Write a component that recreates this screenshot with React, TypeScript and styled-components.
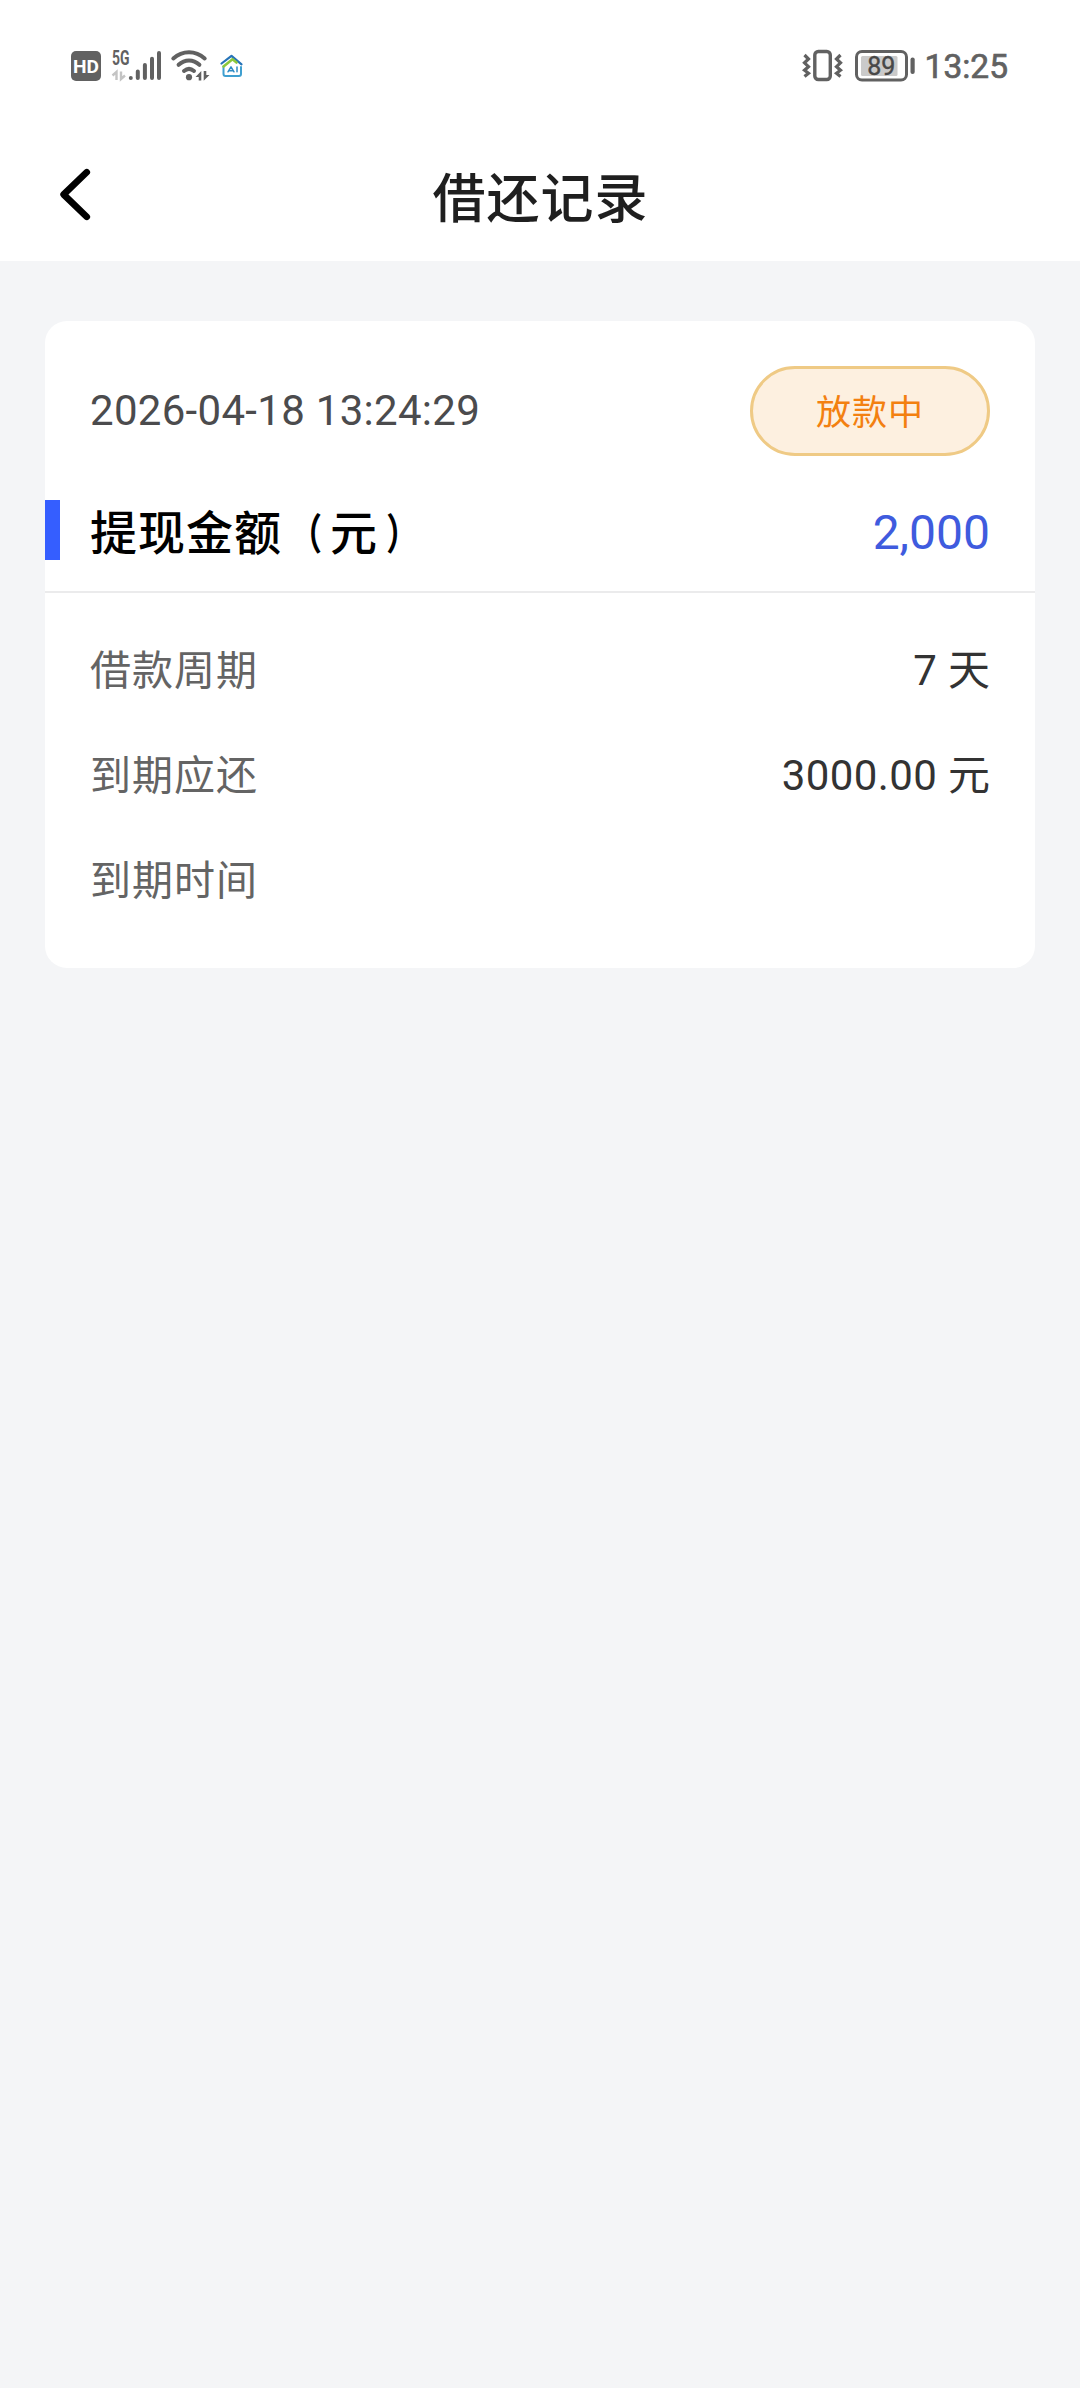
import React from "react";
import styled, { createGlobalStyle } from "styled-components";

const GlobalStyle = createGlobalStyle`
  * { box-sizing: border-box; }
  body {
    margin: 0;
    background: #f4f5f7;
    font-family: Roboto, "Noto Sans CJK SC", sans-serif;
  }
`;

const Page = styled.div`
  width: 1080px;
  min-height: 2388px;
  background: #f4f5f7;
`;

const TopArea = styled.header`
  height: 261px;
  background: #fff;
`;

const StatusBar = styled.div`
  height: 132px;
  padding: 0 72px 0 71px;
  display: flex;
  align-items: center;
  justify-content: space-between;
  color: #616161;
`;

const StatusGroup = styled.div`
  display: flex;
  align-items: center;
`;

const Glyph = styled.svg<{ $w: number; $h: number; $gap?: number }>`
  display: block;
  flex: none;
  width: ${(p) => p.$w}px;
  height: ${(p) => p.$h}px;
  margin-left: ${(p) => p.$gap ?? 0}px;
  overflow: visible;
`;

const Clock = styled.span`
  margin-left: 10px;
  padding-top: 1px;
  font-size: 33.5px;
  line-height: 40px;
  color: #616161;
  -webkit-text-stroke: 0.7px #616161;
`;

const NavBar = styled.nav`
  height: 129px;
  padding: 0 60px;
  display: grid;
  grid-template-columns: 40px 1fr 40px;
  align-items: center;
`;

const BackButton = styled.button`
  display: block;
  padding: 0;
  border: 0;
  background: none;
  margin-top: -4px;
`;

const Title = styled.h1`
  margin: 0;
  padding: 6px 0 0 1px;
  text-align: center;
  font-size: 53px;
  letter-spacing: 1px;
  line-height: 80px;
  font-weight: 500;
  color: #1f1f1f;
`;

const Card = styled.section`
  margin: 60px 45px 0;
  height: 647px;
  background: #fff;
  border-radius: 22px;
`;

const CardHead = styled.div`
  display: flex;
  align-items: center;
  justify-content: space-between;
  padding: 45px 45px 0;
`;

const DateText = styled.time`
  font-size: 42px;
  letter-spacing: 0.3px;
  line-height: 50px;
  color: #4b4b4d;
`;

const Badge = styled.span`
  width: 240px;
  height: 90px;
  display: flex;
  align-items: center;
  justify-content: center;
  padding-top: 5px;
  border: 3px solid #efca85;
  border-radius: 45px;
  background: #fdf0e0;
  color: #f38010;
  font-size: 35px;
  letter-spacing: 1px;
  line-height: 50px;
`;

const AmountRow = styled.div`
  display: flex;
  align-items: center;
  height: 137px;
  padding: 19px 45px 0 0;
  border-bottom: 2px solid #ebebec;
`;

const Accent = styled.i`
  width: 15px;
  height: 60px;
  margin: -6px 30px 0 0;
  background: #355eff;
`;

const AmountLabel = styled.span`
  flex: 1;
  padding-top: 1px;
  font-size: 47px;
  letter-spacing: 1px;
  line-height: 60px;
  font-weight: 500;
  color: #000;
`;

const Paren = styled.span<{ $origin: number }>`
  display: inline-block;
  width: 48px;
  font-weight: 700;
  transform: scale(0.68, 0.9);
  transform-origin: ${(p) => p.$origin}px 60%;
`;

const Amount = styled.span`
  font-size: 48px;
  line-height: 60px;
  color: #3f5bde;
`;

const Details = styled.dl`
  margin: 0;
  padding: 25px 45px 0;
`;

const Row = styled.div`
  height: 105px;
  display: flex;
  align-items: center;
  justify-content: space-between;
`;

const Label = styled.dt`
  font-size: 41px;
  letter-spacing: 1px;
  line-height: 60px;
  color: #646464;
`;

const Value = styled.dd`
  margin: 0;
  font-size: 42px;
  line-height: 60px;
  color: #333;
`;

const Digits = styled.span`
  letter-spacing: 0.4px;
`;

const GREY = "#616161";

const HdIcon = () => (
  <Glyph $w={30} $h={30} viewBox="0 0 30 30">
    <rect width="30" height="30" rx="5" fill={GREY} />
    <text x="15" y="21.5" textAnchor="middle" fontSize="18" fontWeight="700" fill="#fff" textLength="26" lengthAdjust="spacingAndGlyphs">
      HD
    </text>
  </Glyph>
);

const SignalIcon = () => (
  <Glyph $w={50} $h={32} $gap={11} viewBox="0 0 50 32">
    <text x="0" y="15" fontSize="19.5" fontWeight="700" fill={GREY} textLength="17.5" lengthAdjust="spacingAndGlyphs">
      5G
    </text>
    <path d="M0.500 25.500L4.500 22V30M9 21.500V29L13 25.500" fill="none" stroke="#c4c4c4" strokeWidth="2.400" />
    <g stroke={GREY} strokeWidth="4" strokeLinecap="round">
      <path d="M18.800 28v.1M25.800 21.500v6.600M32.900 15v13.100M40 8.700v19.400M47 3v25.100" />
    </g>
  </Glyph>
);

const WifiIcon = () => (
  <Glyph $w={38} $h={32} $gap={9} viewBox="0 0 38 32">
    <g fill="none" stroke={GREY} strokeWidth="4" strokeLinecap="round">
      <path d="M2.300 8.500C11.500 .2 24.500 .2 33.700 8.500" />
      <path d="M7.600 14.800C13.800 9 22.200 9 28.400 14.800" />
      <path d="M13 21C16.200 18.300 19.800 18.300 23 21" />
    </g>
    <circle cx="18" cy="27.200" r="3.100" fill={GREY} />
    <path d="M24.500 27l5.800-6v9.500h-2.600V27zM38.500 25l-5.800 5.800v-9.800h2.600v4z" fill={GREY} />
  </Glyph>
);

const HomeIcon = () => (
  <Glyph $w={24} $h={24} $gap={11} viewBox="0 0 24 24">
    <g fill="none" strokeLinecap="round" strokeLinejoin="round">
      <path d="M3.500 12.500v7.500q0 2 2 2h13.500q2 0 2-2v-7" stroke="#3f9fd0" strokeWidth="2" />
      <path d="M1.500 9.500L11.500 1.800l10 8.500" stroke="#2673b8" strokeWidth="2.200" />
      <path d="M3.500 12.500L12.500 5.200l4 3.300" stroke="#8cc83c" strokeWidth="2.600" />
      <path d="M8 17.800l3-5 3 5M9.300 16.700h3.600M17 13v4.800" stroke="#2f8bc4" strokeWidth="1.500" />
    </g>
  </Glyph>
);

const VibrateIcon = () => (
  <Glyph $w={39} $h={32} viewBox="0 0 39 32">
    <rect x="11.800" y="1.500" width="15.500" height="28" rx="3.500" fill="none" stroke={GREY} strokeWidth="3.400" />
    <g fill="none" stroke={GREY} strokeWidth="3.200">
      <path d="M1.500 5l4 4-4 3.800 4 3.800-4 3.600 4 3-4 3.300" />
      <path d="M37.500 5l-4 4 4 3.800-4 3.800 4 3.600-4 3 4 3.300" />
    </g>
  </Glyph>
);

const BatteryIcon = () => (
  <Glyph $w={60} $h={32} $gap={13} viewBox="0 0 60 32">
    <rect x="1.500" y="1.500" width="50" height="28.500" rx="5.500" fill="none" stroke={GREY} strokeWidth="3" />
    <rect x="6" y="6" width="36.500" height="20" rx="1.500" fill="#cacaca" />
    <rect x="55.500" y="7.500" width="4.200" height="16.500" rx="2" fill={GREY} />
    <text x="26.300" y="24.500" textAnchor="middle" fontSize="25" fill="#484848" stroke="#484848" strokeWidth="0.4">
      89
    </text>
  </Glyph>
);

const BackIcon = () => (
  <Glyph $w={30} $h={51} viewBox="0 0 30 51">
    <path d="M26.800 3.200L3.600 25.500 26.800 47.800" fill="none" stroke="#000" strokeWidth="6.600" strokeLinecap="round" strokeLinejoin="round" />
  </Glyph>
);

const details = [
  { label: "借款周期", value: "7", unit: "天" },
  { label: "到期应还", value: "3000.00", unit: "元" },
  { label: "到期时间" },
];

export default function App() {
  return (
    <Page>
      <GlobalStyle />
      <TopArea>
        <StatusBar>
          <StatusGroup>
            <HdIcon />
            <SignalIcon />
            <WifiIcon />
            <HomeIcon />
          </StatusGroup>
          <StatusGroup>
            <VibrateIcon />
            <BatteryIcon />
            <Clock>13:25</Clock>
          </StatusGroup>
        </StatusBar>
        <NavBar>
          <BackButton aria-label="返回">
            <BackIcon />
          </BackButton>
          <Title>借还记录</Title>
        </NavBar>
      </TopArea>
      <Card>
        <CardHead>
          <DateText>2026-04-18 13:24:29</DateText>
          <Badge>放款中</Badge>
        </CardHead>
        <AmountRow>
          <Accent />
          <AmountLabel>
            提现金额<Paren $origin={25}>（</Paren>元<Paren $origin={26}>）</Paren>
          </AmountLabel>
          <Amount>2,000</Amount>
        </AmountRow>
        <Details>
          {details.map((d) => (
            <Row key={d.label}>
              <Label>{d.label}</Label>
              {d.value && (
                <Value>
                  <Digits>{d.value} </Digits>
                  {d.unit}
                </Value>
              )}
            </Row>
          ))}
        </Details>
      </Card>
    </Page>
  );
}
